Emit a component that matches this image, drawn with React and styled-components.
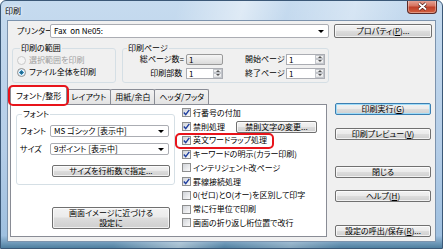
import React from "react";
import styled, { createGlobalStyle } from "styled-components";

// ==============================
// =====  Styled Component  =====
// ==============================

const GlobalStyle = createGlobalStyle`
  html, body {
    margin: 0;
    padding: 0;
    background: #fff;
  }
  body {
    font-family: "Noto Sans CJK JP", "Noto Sans", sans-serif;
    font-size: 8px;
    line-height: 10px;
    color: #000;
    font-feature-settings: "palt";
  }
  * {
    box-sizing: border-box;
  }
`;

const Window = styled.div`
  width: 443px;
  height: 249px;
  border: 1px solid #3b5877;
  border-radius: 6px 6px 0 0;
  overflow: hidden;
  padding: 0 6px 6px;
  display: flex;
  flex-direction: column;
  background: linear-gradient(
      105deg,
      rgba(255, 255, 255, 0) 35%,
      rgba(255, 255, 255, 0.45) 48%,
      rgba(255, 255, 255, 0) 57%,
      rgba(255, 255, 255, 0.3) 70%,
      rgba(255, 255, 255, 0) 80%
    ),
    linear-gradient(180deg, #c6dbef 0%, #b4cde7 60%, #9fc0e0 95%, #4f7f9f 100%);
`;

const TitleBar = styled.div`
  height: 19px;
  flex: none;
  display: flex;
  justify-content: space-between;
  align-items: flex-start;
`;

const Title = styled.div`
  margin: 5px 0 0 -2px;
  text-shadow: 0 0 5px #fff, 0 0 3px #fff;
`;

const CloseButton = styled.div`
  width: 30px;
  height: 14px;
  margin: -1px -1px 0 0;
  border: 1px solid #5b2a27;
  border-top: none;
  border-radius: 0 0 4px 4px;
  background: linear-gradient(180deg, #e8aa9e 0%, #d6735f 45%, #c0402a 55%, #d2603f 100%);
  box-shadow: inset 0 0 0 1px rgba(255, 255, 255, 0.35);
  display: flex;
  align-items: center;
  justify-content: center;
`;

const Client = styled.div`
  flex: 1;
  border: 1px solid #7c93ad;
  background: #f0f0f0;
  display: grid;
  grid-template-columns: 319px 98px;
  grid-template-rows: auto auto 1fr;
  column-gap: 5px;
  padding: 3px 3px 0 2px;
`;

const PrinterRow = styled.div`
  display: flex;
  align-items: center;
  height: 14px;
  padding-left: 7px;
`;

const FieldLabel = styled.span`
  width: ${p => (p.$w ? `${p.$w}px` : "auto")};
  flex: none;
  white-space: nowrap;
  text-align: ${p => (p.$right ? "right" : "left")};
  padding-left: ${p => p.$pl || 0}px;
`;

const Combo = styled.div`
  flex: ${p => (p.$w ? "none" : "1")};
  width: ${p => (p.$w ? `${p.$w}px` : "auto")};
  height: ${p => p.$h}px;
  border: 1px solid #abadb3;
  border-radius: 2px;
  background: #fff;
  display: flex;
  align-items: center;
  padding: 0 4px 0 3px;
  white-space: nowrap;
`;

const Arrow = styled.span`
  margin-left: auto;
  width: 0;
  height: 0;
  border-left: 3px solid transparent;
  border-right: 3px solid transparent;
  border-top: 3px solid #000;
`;

const Button = styled.button`
  font: inherit;
  color: #000;
  padding: 0;
  flex: none;
  height: ${p => p.$h || 12}px;
  width: ${p => (p.$w ? `${p.$w}px` : "auto")};
  margin: ${p => p.$m || 0};
  border: 1px solid ${p => (p.$default ? "#3c7fb1" : "#707070")};
  border-radius: 2px;
  background: linear-gradient(180deg, #f2f2f2 0%, #ebebeb 45%, #dddddd 50%, #cfcfcf 100%);
  box-shadow: inset 0 0 0 1px ${p => (p.$default ? "#9fdcf9" : "rgba(255, 255, 255, 0.7)")};
  display: flex;
  align-items: center;
  justify-content: center;
  text-align: center;
  line-height: 10px;
  white-space: nowrap;
`;

const Key = styled.span`
  text-decoration: underline;
`;

const GroupsRow = styled.div`
  display: flex;
  gap: 6px;
  padding-left: 2px;
  margin-top: 5px;
`;

const Group = styled.fieldset`
  margin: 0;
  min-width: 0;
  width: ${p => p.$w}px;
  padding: ${p => p.$pad};
  border: 1px solid #d5dfe5;
  border-radius: 3px;
`;

const Legend = styled.legend`
  padding: 0 1px;
  margin-left: ${p => p.$ml}px;
  line-height: 10px;
`;

const RadioRow = styled.div`
  display: flex;
  align-items: center;
  gap: 3px;
  height: 12px;
  color: ${p => (p.$disabled ? "#a0a0a0" : "#000")};
`;

const Radio = styled.span`
  width: 9px;
  height: 9px;
  flex: none;
  border-radius: 50%;
  border: 1px solid ${p => (p.$disabled ? "#c9c9c9" : "#8e8f8f")};
  background: ${p =>
    p.$checked
      ? "radial-gradient(circle, #1c5a80 0%, #2e8cb8 40%, #dcefff 45%, #f4f4f4 100%)"
      : p.$disabled
      ? "#f4f4f4"
      : "linear-gradient(135deg, #d2d4d8, #fff)"};
`;

const PageGrid = styled.div`
  display: grid;
  grid-template-columns: 61px 37px 59px 39px;
  grid-template-rows: 12px 12px;
  column-gap: 2px;
  row-gap: 2px;
  align-items: center;
  padding: 0 2px 3px 0;
`;

const ReadField = styled.div`
  height: 11px;
  border: 1px solid #9a9a9a;
  border-radius: 2px;
  background: linear-gradient(180deg, #f6f6f6, #dadada);
  padding-left: 2px;
  line-height: 9px;
`;

const SpinBox = styled.div`
  height: 11px;
  border: 1px solid #abadb3;
  background: #fff;
  display: flex;
`;

const SpinValue = styled.span`
  flex: 1;
  padding-left: 2px;
  line-height: 9px;
`;

const SpinButtons = styled.div`
  width: 9px;
  display: flex;
  flex-direction: column;
`;

const SpinHalf = styled.span`
  flex: 1;
  border: 1px solid #c3c6cb;
  background: linear-gradient(180deg, #f7f7f7, #e2e3e5);
  display: flex;
  align-items: center;
  justify-content: center;

  &::after {
    content: "";
    border-left: 2px solid transparent;
    border-right: 2px solid transparent;
    ${p => (p.$up ? "border-bottom: 2px solid #555;" : "border-top: 2px solid #555;")}
  }
`;

const TabArea = styled.div`
  margin-top: 3px;
`;

const TabStrip = styled.div`
  height: 18px;
  display: flex;
  align-items: flex-end;
`;

const Tab = styled.div`
  position: relative;
  height: ${p => (p.$active ? 19 : 15)}px;
  margin-bottom: ${p => (p.$active ? -1 : 0)}px;
  margin-left: ${p => (p.$active ? 0 : -1)}px;
  padding: 0 ${p => (p.$active ? 5 : 4)}px;
  border: 1px solid #898c95;
  border-bottom: none;
  border-radius: 2px 2px 0 0;
  background: ${p => (p.$active ? "#fff" : "linear-gradient(180deg, #f3f3f3, #e3e3e3)")};
  z-index: ${p => (p.$active ? 2 : 0)};
  display: flex;
  align-items: center;
  white-space: nowrap;

  &::after {
    content: "";
    display: ${p => (p.$marked ? "block" : "none")};
    position: absolute;
    top: -2px;
    bottom: -1px;
    left: -3px;
    right: -3px;
    border: 2px solid #e8141b;
    border-radius: 5px;
  }
`;

const Panel = styled.div`
  position: relative;
  z-index: 1;
  height: 133px;
  margin-right: 2px;
  border: 1px solid #898c95;
  background: #fff;
  display: flex;
  padding: 1px 0 0 5px;
`;

const FontCol = styled.div`
  width: 159px;
  flex: none;
  display: flex;
  flex-direction: column;
  padding-top: 3px;
`;

const FontRow = styled.div`
  display: flex;
  align-items: center;
  height: 12px;
  margin-top: 6px;
`;

const CheckList = styled.div`
  margin-left: 6px;
  display: flex;
  flex-direction: column;
`;

const CheckRow = styled.div`
  position: relative;
  height: 13.75px;
  width: fit-content;
  display: flex;
  align-items: center;
  gap: 2px;
  padding-left: 1px;
  white-space: nowrap;

  &::after {
    content: "";
    display: ${p => (p.$marked ? "block" : "none")};
    position: absolute;
    top: -1px;
    bottom: -2px;
    left: -6px;
    right: -7px;
    border: 2px solid #e8141b;
    border-radius: 5px;
  }
`;

const CheckBox = styled.span`
  width: 9px;
  height: 9px;
  flex: none;
  border: 1px solid #8e8f8f;
  background: linear-gradient(135deg, #d0d3d8, #fbfbfb);
  display: flex;
  align-items: center;
  justify-content: center;
`;

const Stack = styled.div`
  display: flex;
  flex-direction: column;
  padding-top: 20px;
`;

// ==============================
// =====      Component     =====
// ==============================

const Check = ({ on }) => (
  <CheckBox>
    {on && (
      <svg width="7" height="7" viewBox="0 0 7 7">
        <path d="M0.8 3.6 L2.7 5.6 L6.3 0.9" fill="none" stroke="#1f3f9f" strokeWidth="1.4" />
      </svg>
    )}
  </CheckBox>
);

const Spin = ({ value }) => (
  <SpinBox>
    <SpinValue>{value}</SpinValue>
    <SpinButtons>
      <SpinHalf $up />
      <SpinHalf />
    </SpinButtons>
  </SpinBox>
);

const options = [
  { label: "行番号の付加", on: true },
  { label: "禁則処理", on: true, button: true },
  { label: "英文ワードラップ処理", on: true, marked: true },
  { label: "キーワードの明示(カラー印刷)", on: true },
  { label: "インテリジェント改ページ", on: false },
  { label: "罫線接続処理", on: true },
  { label: "0(ゼロ)とO(オー)を区別して印字", on: false },
  { label: "常に行単位で印刷", on: false },
  { label: "画面の折り返し桁位置で改行", on: false },
];

function ButtonStack() {
  return (
    <Stack>
      <Button $default $m="0 1px">
        印刷実行(<Key>G</Key>)
      </Button>
      <Button $m="13px 1px 0">
        印刷プレビュー(<Key>V</Key>)
      </Button>
      <Button $m="26px 1px 0">閉じる</Button>
      <Button $m="12px 1px 0">
        ヘルプ(<Key>H</Key>)
      </Button>
      <Button $m="23px 1px 0">
        設定の呼出/保存(<Key>R</Key>)...
      </Button>
    </Stack>
  );
}

export default function App() {
  return (
    <>
      <GlobalStyle />
      <Window>
        <TitleBar>
          <Title>印刷</Title>
          <CloseButton>
            <svg width="11" height="9" viewBox="0 0 11 9">
              <path d="M2 1.5 L9 7.5 M9 1.5 L2 7.5" stroke="#4a1a14" strokeWidth="3.2" />
              <path d="M2 1.5 L9 7.5 M9 1.5 L2 7.5" stroke="#fff" strokeWidth="1.8" />
            </svg>
          </CloseButton>
        </TitleBar>

        <Client>
          <PrinterRow>
            <FieldLabel $w={33}>プリンター</FieldLabel>
            <Combo $h={14}>
              Fax&nbsp; on Ne05:
              <Arrow />
            </Combo>
          </PrinterRow>
          <Button $h={14}>
            プロパティ(<Key>P</Key>)...
          </Button>

          <GroupsRow>
            <Group $w={104} $pad="1px 0 4px 4px">
              <Legend $ml={3}>印刷の範囲</Legend>
              <RadioRow $disabled>
                <Radio $disabled />
                選択範囲を印刷
              </RadioRow>
              <RadioRow>
                <Radio $checked />
                ファイル全体を印刷
              </RadioRow>
            </Group>
            <Group $w={207} $pad="0">
              <Legend $ml={4}>印刷ページ</Legend>
              <PageGrid>
                <FieldLabel $right>総ページ数=</FieldLabel>
                <ReadField>1</ReadField>
                <FieldLabel $pl={20}>開始ページ</FieldLabel>
                <Spin value="1" />
                <FieldLabel $right>印刷部数&nbsp;</FieldLabel>
                <Spin value="1" />
                <FieldLabel $pl={20}>終了ページ</FieldLabel>
                <Spin value="1" />
              </PageGrid>
            </Group>
          </GroupsRow>
          <div />

          <TabArea>
            <TabStrip>
              <Tab $active $marked>
                フォント/整形
              </Tab>
              <Tab>レイアウト</Tab>
              <Tab>用紙/余白</Tab>
              <Tab>ヘッダ/フッタ</Tab>
            </TabStrip>
            <Panel>
              <FontCol>
                <Group $w={159} $pad="0 5px 7px 3px">
                  <Legend $ml={2}>フォント</Legend>
                  <FontRow>
                    <FieldLabel $w={30}>フォント</FieldLabel>
                    <Combo $w={119} $h={12}>
                      MS ゴシック [表示中]
                      <Arrow />
                    </Combo>
                  </FontRow>
                  <FontRow>
                    <FieldLabel $w={30}>サイズ</FieldLabel>
                    <Combo $w={119} $h={12}>
                      9ポイント [表示中]
                      <Arrow />
                    </Combo>
                  </FontRow>
                  <Button $w={118} $m="10px 0 0 32px">
                    サイズを行桁数で指定...
                  </Button>
                </Group>
                <Button $w={118} $h={22} $m="22px 0 0 36px">
                  画面イメージに近づける
                  <br />
                  設定に
                </Button>
              </FontCol>
              <CheckList>
                {options.map(o => (
                  <CheckRow key={o.label} $marked={o.marked}>
                    <Check on={o.on} />
                    {o.label}
                    {o.button && (
                      <Button $w={81} $m="0 0 0 9px">
                        禁則文字の変更...
                      </Button>
                    )}
                  </CheckRow>
                ))}
              </CheckList>
            </Panel>
          </TabArea>

          <ButtonStack />
        </Client>
      </Window>
    </>
  );
}
